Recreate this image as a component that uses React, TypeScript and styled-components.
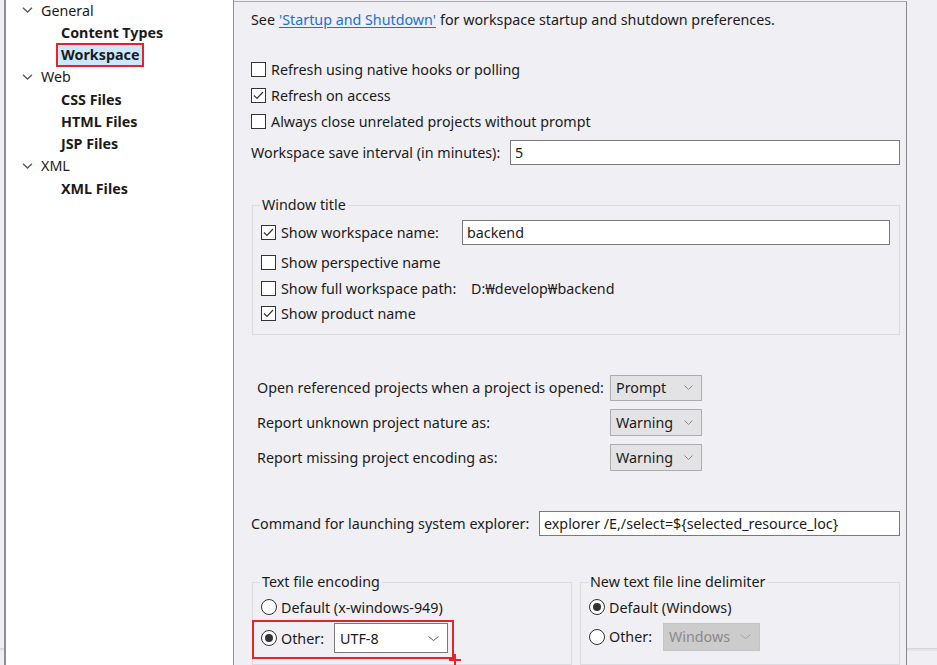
import React from "react";
import styled, { createGlobalStyle } from "styled-components";

const GlobalStyle = createGlobalStyle`
  html, body { margin: 0; padding: 0; }
  body {
    font-family: "Noto Sans", "Noto Sans CJK KR", sans-serif;
    font-size: 14.3px;
    color: #1b1b1b;
    background: #f0eff3;
  }
  * { box-sizing: border-box; }
`;

const Page = styled.div`
  display: flex;
  width: 937px;
  height: 665px;
  overflow: hidden;
  background: #f0eff3;
`;

const Gutter = styled.div<{ $w: number }>`
  flex: ${(p) => (p.$w ? `0 0 ${p.$w}px` : "1")};
  display: flex;
  flex-direction: column;
  justify-content: flex-end;
`;

const GutterFoot = styled.div`
  height: 17px;
  border-top: 1px solid #d6d6d9;
  box-shadow: inset 0 2px 0 #e4e4e7;
`;

const TreePanel = styled.div`
  flex: 0 0 230px;
  background: #ffffff;
  border-left: 2px solid #8f8f8f;
  border-right: 1px solid #8f8f8f;
  overflow: hidden;
`;

const TreeList = styled.div`
  margin-top: -1px;
  display: flex;
  flex-direction: column;
`;

const TreeRow = styled.div<{ $level: number }>`
  height: 22.25px;
  display: flex;
  align-items: center;
  padding-left: ${(p) => (p.$level === 0 ? 16 : 50)}px;
  font-weight: ${(p) => (p.$level === 0 ? 400 : 700)};
  white-space: nowrap;
`;

const Twisty = styled.svg`
  width: 11px;
  height: 6px;
  margin-right: 3px;
  flex: none;
`;

const TreeLabel = styled.span<{ $selected?: boolean }>`
  display: inline-flex;
  align-items: center;
  height: 24px;
  padding: 0 3px;
  border: 2px solid ${(p) => (p.$selected ? "#e3242b" : "transparent")};
  background: ${(p) => (p.$selected ? "#cce8ff" : "transparent")};
`;

const MainPanel = styled.div`
  flex: 0 0 673px;
  margin-top: 1px;
  border-top: 1px solid #ababab;
  border-right: 1px solid #878787;
  padding: 0 6px 0 17px;
  display: flex;
  flex-direction: column;
`;

const Intro = styled.div`
  height: 34px;
  display: flex;
  align-items: center;
  white-space: nowrap;
`;

const Link = styled.a`
  color: #1f6fd0;
  text-decoration: underline;
  text-underline-offset: 2px;
  margin: 0 4px;
`;

const Block = styled.div<{ $mt: number }>`
  margin-top: ${(p) => p.$mt}px;
  display: flex;
  flex-direction: column;
`;

const Row = styled.div<{ $h?: number; $indent?: number; $gap?: number }>`
  height: ${(p) => p.$h ?? 26}px;
  display: flex;
  align-items: center;
  padding-left: ${(p) => p.$indent ?? 0}px;
  margin-bottom: ${(p) => p.$gap ?? 0}px;
  white-space: nowrap;
`;

const BoxMark = styled.span`
  width: 15px;
  height: 15px;
  border: 1px solid #333333;
  background: #ffffff;
  margin-right: 5px;
  flex: none;
  display: inline-flex;
  align-items: center;
  justify-content: center;
`;

const Label = styled.span<{ $w?: number }>`
  width: ${(p) => (p.$w ? `${p.$w}px` : "auto")};
  flex: none;
  white-space: nowrap;
`;

const TextInput = styled.div<{ $h?: number }>`
  flex: 1;
  height: ${(p) => p.$h ?? 25}px;
  border: 1px solid #7a7a7a;
  background: #ffffff;
  display: flex;
  align-items: center;
  padding-left: 4px;
  white-space: nowrap;
`;

const Group = styled.fieldset<{ $mt?: number; $w?: number; $pt?: number; $pb?: number }>`
  margin: ${(p) => p.$mt ?? 0}px 0 0 1px;
  ${(p) => (p.$w ? `flex: 0 0 ${p.$w}px;` : "flex: 1;")}
  min-width: 0;
  border: 1px solid #dcdcdf;
  padding: ${(p) => p.$pt ?? 5}px 9px ${(p) => p.$pb ?? 5}px 8px;
`;

const Legend = styled.legend`
  padding: 0 2px;
  margin-left: -1px;
  line-height: 20px;
  height: 20px;
`;

const TitleGrid = styled.div`
  display: grid;
  grid-template-columns: 201px 1fr;
  grid-template-rows: 30px 26px 26px 25px;
  & > :first-child,
  & > :nth-child(2) {
    height: 26px;
    align-self: start;
  }
`;

const Cell = styled.div<{ $span?: boolean; $pad?: number }>`
  display: flex;
  align-items: center;
  grid-column: ${(p) => (p.$span ? "1 / 3" : "auto")};
  padding-left: ${(p) => p.$pad ?? 0}px;
  white-space: nowrap;
`;

const Combo = styled.div<{ $variant?: "button" | "field" | "disabled"; $w: number; $h: number }>`
  flex: none;
  width: ${(p) => p.$w}px;
  height: ${(p) => p.$h}px;
  display: flex;
  align-items: center;
  justify-content: space-between;
  padding: 0 8px 0 5px;
  border: 1px solid
    ${(p) => (p.$variant === "field" ? "#7a7a7a" : p.$variant === "disabled" ? "#c4c4c4" : "#adadad")};
  background: ${(p) => (p.$variant === "field" ? "#ffffff" : p.$variant === "disabled" ? "#cccccc" : "#e3e3e5")};
  color: ${(p) => (p.$variant === "disabled" ? "#8a8a8a" : "inherit")};
`;

const GroupRow = styled.div<{ $mt: number }>`
  display: flex;
  align-items: stretch;
  margin-top: ${(p) => p.$mt}px;
  gap: 7px;
`;

const RadioMark = styled.span<{ $on?: boolean }>`
  width: 16px;
  height: 16px;
  border-radius: 50%;
  border: 1px solid #333333;
  background: #ffffff;
  margin-right: 4px;
  flex: none;
  display: inline-flex;
  align-items: center;
  justify-content: center;
  &::after {
    content: "";
    width: 8px;
    height: 8px;
    border-radius: 50%;
    background: ${(p) => (p.$on ? "#333333" : "transparent")};
  }
`;

const Callout = styled.div`
  position: relative;
  width: fit-content;
  margin-left: -9px;
  display: flex;
  align-items: center;
  height: 39px;
  padding: 1px 4px 4px 7px;
  border: 2px solid #e3242b;
`;

const Cursor = styled.svg`
  position: absolute;
  right: -9px;
  bottom: -9px;
  width: 12px;
  height: 12px;
`;

const Chevron = ({ color = "#666", w = 9 }: { color?: string; w?: number }) => (
  <svg width={w} height={5} viewBox={`0 0 ${w} 5`} style={{ flex: "none" }}>
    <path d={`M0.5 0.5 L${w / 2} 4.5 L${w - 0.5} 0.5`} fill="none" stroke={color} strokeWidth="1" />
  </svg>
);

const Check = ({ on }: { on?: boolean }) => (
  <BoxMark>
    {on && (
      <svg width="13" height="13" viewBox="0 0 13 13">
        <path d="M2 6.5 L5 9.5 L11 3" fill="none" stroke="#333" strokeWidth="1.2" />
      </svg>
    )}
  </BoxMark>
);

const tree: { level: number; label: string; selected?: boolean }[] = [
  { level: 0, label: "General" },
  { level: 1, label: "Content Types" },
  { level: 1, label: "Workspace", selected: true },
  { level: 0, label: "Web" },
  { level: 1, label: "CSS Files" },
  { level: 1, label: "HTML Files" },
  { level: 1, label: "JSP Files" },
  { level: 0, label: "XML" },
  { level: 1, label: "XML Files" },
];

export default function App() {
  return (
    <>
      <GlobalStyle />
      <Page>
        <Gutter $w={4}>
          <GutterFoot />
        </Gutter>
        <TreePanel>
          <TreeList>
            {tree.map((t) => (
              <TreeRow key={t.label} $level={t.level}>
                {t.level === 0 && (
                  <Twisty viewBox="0 0 11 6">
                    <path d="M1 0.8 L5.5 5 L10 0.8" fill="none" stroke="#5a5a5a" strokeWidth="1.4" />
                  </Twisty>
                )}
                <TreeLabel $selected={t.selected}>{t.label}</TreeLabel>
              </TreeRow>
            ))}
          </TreeList>
        </TreePanel>
        <MainPanel>
          <Intro>
            See<Link>'Startup and Shutdown'</Link>for workspace startup and shutdown preferences.
          </Intro>

          <Block $mt={20}>
            <Row>
              <Check />
              Refresh using native hooks or polling
            </Row>
            <Row>
              <Check on />
              Refresh on access
            </Row>
            <Row>
              <Check />
              Always close unrelated projects without prompt
            </Row>
          </Block>

          <Block $mt={5}>
            <Row>
              <Label $w={259}>Workspace save interval (in minutes):</Label>
              <TextInput>5</TextInput>
            </Row>
          </Block>

          <Group $mt={30} $pt={4} $pb={0}>
            <Legend>Window title</Legend>
            <TitleGrid>
              <Cell>
                <Check on />
                Show workspace name:
              </Cell>
              <Cell>
                <TextInput>backend</TextInput>
              </Cell>
              <Cell $span>
                <Check />
                Show perspective name
              </Cell>
              <Cell>
                <Check />
                Show full workspace path:
              </Cell>
              <Cell $pad={9}>D:₩develop₩backend</Cell>
              <Cell $span>
                <Check on />
                Show product name
              </Cell>
            </TitleGrid>
          </Group>

          <Block $mt={39}>
            <Row $h={27} $indent={6} $gap={8}>
              <Label $w={353}>Open referenced projects when a project is opened:</Label>
              <Combo $w={92} $h={26}>
                Prompt
                <Chevron color="#8a8a8a" w={9} />
              </Combo>
            </Row>
            <Row $h={27} $indent={6} $gap={8}>
              <Label $w={353}>Report unknown project nature as:</Label>
              <Combo $w={92} $h={27}>
                Warning
                <Chevron color="#8a8a8a" w={9} />
              </Combo>
            </Row>
            <Row $h={27} $indent={6}>
              <Label $w={353}>Report missing project encoding as:</Label>
              <Combo $w={92} $h={27}>
                Warning
                <Chevron color="#8a8a8a" w={9} />
              </Combo>
            </Row>
          </Block>

          <Block $mt={39}>
            <Row>
              <Label $w={288}>Command for launching system explorer:</Label>
              <TextInput>explorer /E,/select=${"{"}selected_resource_loc{"}"}</TextInput>
            </Row>
          </Block>

          <GroupRow $mt={36}>
            <Group $w={320} $pt={2}>
              <Legend>Text file encoding</Legend>
              <Row>
                <RadioMark />
                Default (x-windows-949)
              </Row>
              <Callout>
                <RadioMark $on />
                <Label $w={53}>Other:</Label>
                <Combo $variant="field" $w={114} $h={30}>
                  UTF-8
                  <Chevron color="#555" w={11} />
                </Combo>
                <Cursor viewBox="0 0 12 12">
                  <path d="M6 0 V12 M0 6 H12" stroke="#e3242b" strokeWidth="2" />
                </Cursor>
              </Callout>
            </Group>
            <Group $pt={2}>
              <Legend>New text file line delimiter</Legend>
              <Row>
                <RadioMark $on />
                Default (Windows)
              </Row>
              <Row $h={33}>
                <RadioMark />
                <Label $w={54}>Other:</Label>
                <Combo $variant="disabled" $w={97} $h={28}>
                  Windows
                  <Chevron color="#a3a3a3" w={11} />
                </Combo>
              </Row>
            </Group>
          </GroupRow>
        </MainPanel>
        <Gutter $w={0}>
          <GutterFoot />
        </Gutter>
      </Page>
    </>
  );
}
